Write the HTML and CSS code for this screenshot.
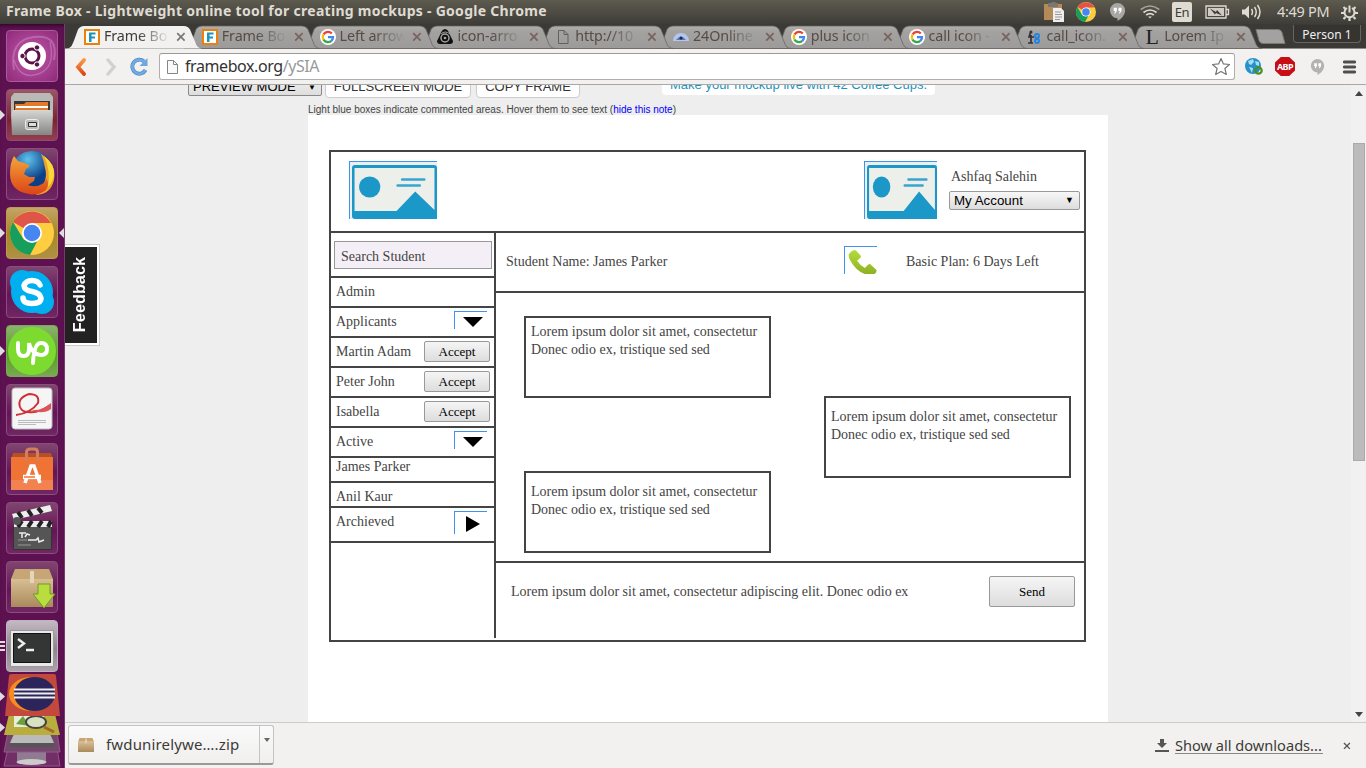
FILE: index.html
```html
<!DOCTYPE html>
<html lang="en">
<head>
<meta charset="utf-8">
<title>Frame Box - Lightweight online tool for creating mockups</title>
<link rel="stylesheet" href="styles.css">
</head>
<body>
<svg class="defs" width="0" height="0">
  <defs>
    <linearGradient id="tabg" x2="0" y2="1"><stop stop-color="#b0afac"/><stop offset=".25" stop-color="#a3a2a0"/><stop offset="1" stop-color="#9c9b99"/></linearGradient>
    <linearGradient id="orange" x2="0" y2="1"><stop stop-color="#f79a4a"/><stop offset="1" stop-color="#dd4814"/></linearGradient>
    <linearGradient id="metal" x2="0" y2="1"><stop stop-color="#d6d6d4"/><stop offset="1" stop-color="#858583"/></linearGradient>
    <linearGradient id="box" x2="0" y2="1"><stop stop-color="#d8be94"/><stop offset="1" stop-color="#a98a5c"/></linearGradient>
    <linearGradient id="green" x2="0" y2="1"><stop stop-color="#b5dc3c"/><stop offset="1" stop-color="#8cb021"/></linearGradient>
    <linearGradient id="fox" x2="0" y2="1"><stop stop-color="#f4a53a"/><stop offset="1" stop-color="#db4317"/></linearGradient>
    <radialGradient id="globe" cx=".4" cy=".2"><stop stop-color="#5fc3ee"/><stop offset="1" stop-color="#0b3f86"/></radialGradient>
    <symbol id="tab" viewBox="0 0 137 24"><path d="M0 24C5 24 6 21 8 16L12 5Q14 1.500 18 1.500H118Q122 1.500 124 5L129 17Q131 24 136 24Z"/></symbol>
    <symbol id="google" viewBox="0 0 16 16"><circle cx="8" cy="8" r="8" fill="#fff"/><g fill="none" stroke-width="2.300"><path d="M11.800 4.500A5.200 5.200 0 0 0 3.500 5.500" stroke="#ea4335"/><path d="M3.500 5.500A5.200 5.200 0 0 0 3.500 10.700" stroke="#fbbc05"/><path d="M3.500 10.600A5.200 5.200 0 0 0 11.300 11.800" stroke="#34a853"/><path d="M11.300 11.800A5 5 0 0 0 13 8.200H8" stroke="#4285f4"/></g></symbol>
    <symbol id="framebox" viewBox="0 0 16 16"><path fill="#fff" stroke="#e8820c" stroke-width="2" d="M1 1h14v14H1z"/><path d="M5 3.500h6.500v2H7.500v2h3.500v2H7.500V13H5z" fill="#1d93bd"/></symbol>
    <symbol id="chrome" viewBox="0 0 44 44"><circle cx="22" cy="22" r="22" fill="#ffcd40"/><path d="M22 22 3 11A22 22 0 0 1 41 12H22z" fill="#df5648"/><path d="M3 11 14 29 30 25 20 44A22 22 0 0 1 3 11z" fill="#179e5d"/><circle cx="22" cy="22" r="10" fill="#fff"/><circle cx="22" cy="22" r="8.300" fill="#4786f0"/></symbol>
    <symbol id="hangouts" viewBox="0 0 18 21"><path d="M9 1a8 8 0 0 1 8 8c0 5-4 9-8 11v-3a8 8 0 0 1 0-16z"/><path fill="#fff" d="M5 6h3.300v3.500L6.500 12H5.500l1-2.500H5zM10 6h3.300v3.500L11.500 12h-1l1-2.500H10z"/></symbol>
    <symbol id="close" viewBox="0 0 10 10"><path d="M1.200 1.200l7.400 7.400M8.600 1.200l-7.400 7.400" fill="none" stroke-width="1.700"/></symbol>
    <symbol id="photo" viewBox="0 0 84 54" preserveAspectRatio="none"><path fill="#1b98c7" d="M3 0h78q3 0 3 3v51H3q-3 0-3-3V3q0-3 3-3z"/><path fill="#edefeb" d="M2.500 3h79V45L62.500 26.500 44 46H2.500z"/><circle cx="17.500" cy="22" r="10.500" fill="#1b98c7"/><path d="M49.500 14.500h22M45 20.500h22" stroke="#38a5ce" stroke-width="2.400" stroke-linecap="round"/></symbol>
    <symbol id="parcel" viewBox="0 0 42 38"><path fill="#c7a675" d="M4 0h34l4 10H0z"/><path fill="url(#box)" d="M0 10h42v28H0z"/><path fill="#e5d5b8" d="M19 2h4v12h-4z"/></symbol>
  </defs>
</svg>
<div class="desktop">
  <header class="panel">
    <div class="panel-title">Frame Box - Lightweight online tool for creating mockups - Google Chrome</div>
    <div class="tray">
      <svg width="20" height="20" viewBox="0 0 20 20"><path fill="#b48a58" d="M0 2h18v16H0z"/><path fill="#777" d="M4 1h3l1-1h3l1 1h2v4H4z"/><path fill="#eee" d="M9 6h8l3 3v11H9z"/><path stroke="#999" d="M11 10h6M11 12.500h7M11 15h7M11 17.500h5"/></svg>
      <svg class="t-chrome" width="20" height="20"><use href="#chrome"/></svg>
      <svg class="t-hang" width="17" height="20"><use href="#hangouts" fill="#a8a7a4"/></svg>
      <svg class="t-wifi" width="20" height="14" viewBox="0 0 20 14" fill="none" stroke="#dfdbd2" stroke-width="1.700"><path d="M.8 4.500q9.200-7 18.400 0" opacity=".6"/><path d="M3.500 7.500q6.500-5 13 0M6.200 10q3.800-2.800 7.600 0"/><path d="M8.200 11.500h3.600L10 13.500z" fill="#dfdbd2" stroke="none"/></svg>
      <span class="lang">En</span>
      <svg class="t-bat" width="25" height="14" viewBox="0 0 25 14"><path fill="none" stroke="#dfdbd2" stroke-width="1.300" d="M1 1h20v12H1zM21.500 4.500h2v5h-2"/><path fill="#cfcbc3" d="M3 3h16v8H3z"/><path fill="#3c3b37" d="M5 3.500l6 3.500 1-2 5 5.500-6-2.500-1 1.500z"/></svg>
      <svg class="t-vol" width="21" height="16" viewBox="0 0 21 16"><path fill="#dfdbd2" d="M1 5.500h3l4-4v13l-4-4H1z"/><path fill="none" stroke="#dfdbd2" stroke-width="1.500" d="M10.500 5q2 3 0 6M13.500 3q3.500 5 0 10M16.500 1q5 7 0 14"/></svg>
      <span class="clock">4:49 PM</span>
      <svg class="t-gear" width="17" height="17" viewBox="0 0 17 17" fill="none" stroke="#dfdbd2"><path stroke-width="2" d="M11 4A5 5 0 1 1 6 4M8.500 1.500v7"/><path stroke-width="2.200" d="M0 9h3M14 9h3M8.500 14v3M2.500 3l2 2M14.500 3l-2 2M2.500 15l2-2M14.500 15l-2-2"/></svg>
    </div>
  </header>
  <div class="workspace">
    <nav class="launcher">
      <div class="tile dash"><svg width="52" height="52" viewBox="0 0 52 52"><path d="M8 40Q3 10 28 7T48 30" fill="none" stroke="#d18cc3" stroke-width="2" opacity=".5"/><path d="M44 12Q50 38 32 44T8 30" fill="none" stroke="#d18cc3" stroke-width="1.500" opacity=".5"/><circle cx="26" cy="26" r="14" fill="#fff"/><circle cx="26" cy="26" r="7" fill="none" stroke="#5a1249" stroke-width="3"/><g fill="#5a1249" stroke="#fff"><circle cx="16.500" cy="26" r="2.700"/><circle cx="31" cy="17.500" r="2.700"/><circle cx="31" cy="34.500" r="2.700"/></g></svg></div>
      <div class="tile files run"><svg width="52" height="52" viewBox="0 0 52 52"><path fill="#b9b9b7" d="M5 8l3-4h36l3 4v16H5z"/><path fill="#373735" d="M8 12h36v12H8z"/><path fill="#e4782b" d="M9 15h9l2-2h22v9H9z"/><path fill="#fff" d="M10 17h32v2H10z"/><path fill="url(#metal)" d="M7 21h38l2 4-1 21H6L5 25z"/><rect x="19.500" y="30.500" width="13" height="10" rx="2" fill="#bbb" stroke="#eee"/><path fill="#ddd" stroke="#333" d="M22.500 33.500h8v4h-8z"/></svg></div>
      <div class="tile"><svg width="52" height="52" viewBox="0 0 52 52"><circle cx="26" cy="24" r="21" fill="url(#globe)"/><path fill="#f0a02c" d="M35 6q16 10 13 26-3 14-18 15 13-14 9-27-1-7-4-14z"/><path fill="#f7d83b" d="M38 8q11 8 10 19-1 7-6 12 3-17-4-31z"/><path fill="url(#fox)" d="M8 8l4 5 9 3 3 2-4 3-2 5 5 3 6 0-1 4-6 4q8 3 14-1 3-1 4-6 4 5 0 12-8 6-17 4Q4 43 4 26 4 14 8 8z"/></svg></div>
      <div class="tile gold run focus"><svg width="44" height="44"><use href="#chrome"/></svg></div>
      <div class="tile"><svg width="52" height="52" viewBox="0 0 52 52"><g fill="#00aff0"><circle cx="26" cy="26" r="21"/><circle cx="16" cy="16" r="12"/><circle cx="36" cy="36" r="12"/></g><path d="M34 19Q32 14.500 26 14.500t-8 5q0 4.500 8 6t9 6.500q0 5.500-9 5.500T17 32" fill="none" stroke="#fff" stroke-width="5.500" stroke-linecap="round"/></svg></div>
      <div class="tile lime run"><svg width="52" height="52" viewBox="0 0 52 52"><circle cx="26" cy="26" r="24" fill="#7ddb2f"/><path d="M12 18v6q0 7 5.500 7t5.500-7v-6q1 6 7 11M27 38q1-20 8-20 6 0 6 6 0 6-6 6-3 0-6-2" fill="none" stroke="#fff" stroke-width="4" stroke-linecap="round"/></svg></div>
      <div class="tile"><svg width="52" height="52" viewBox="0 0 52 52"><rect x="6" y="4" width="40" height="41" rx="3" fill="#f5f5f5" stroke="#bbb"/><path d="M10 31q15-2 22-12 2-9-9-9-12 4-9 13 2 5 8 5 10 2 22-7" fill="none" stroke="#cf3036" stroke-width="2"/><path fill="#dc555a" d="M25 26q12 1 20-7v6q-8 6-20 1z"/><path stroke="#bbb" d="M12 36.500h28M12 38.500h28M12 40.500h18"/></svg></div>
      <div class="tile"><svg width="52" height="52" viewBox="0 0 52 52"><path fill="#b74f27" d="M7 10h38l2 6H5z"/><path fill="#ee7334" d="M5 14h42v33H5z"/><path fill="#f28350" d="M5 37h42v10H5z"/><path d="M20.500 18V9q0-3 4-3h4q3 0 3 3v9" fill="none" stroke="#d47f5c" stroke-width="3"/><path d="M19 40l6-17h3l6 17" fill="none" stroke="#fff" stroke-width="3.500"/><path d="M17 34h18" stroke="#fff" stroke-width="4.500"/><path d="M18 34h11" stroke="#ee7334" stroke-width="1.500"/></svg></div>
      <div class="tile"><svg width="52" height="52" viewBox="0 0 52 52"><path fill="#555" stroke="#333" d="M7.500 24.500h38v23h-38z"/><path fill="#eee" d="M6 12L44 3l2 6L8 18zM8 19h38v6H8z"/><path stroke="#222" stroke-width="4" d="M12 10l4 6M22 8l4 6M32 6l4 5M16 19l-4 6M26 19l-4 6M36 19l-4 6M45 19l-3 6"/><circle cx="11" cy="19" r="4" fill="#555"/><path stroke="#eee" fill="none" stroke-width="1.500" d="M13 31h7M16 31v5M19 35l2-3 3 1M22 38h8l2-2 1 4 5-2"/><path stroke="#999" d="M12 38h9M12 43h13"/></svg></div>
      <div class="tile"><svg width="52" height="52" viewBox="0 0 52 52"><use href="#parcel" x="5" y="8" width="42" height="38"/><path d="M32 23h12v10h5L38 47 27 33h5z" fill="#b9dc3e" stroke="#739b22"/></svg></div>
      <div class="tile silver run multi"><svg width="52" height="52" viewBox="0 0 52 52"><path fill="#e9e9e9" stroke="#999" d="M4.500 10.500h43v36h-43z"/><path fill="#343535" stroke="#111" d="M7.500 13.500h37v29h-37z"/><path d="M12 19l6 4.500-6 4.500M20 30h8" fill="none" stroke="#eee" stroke-width="2.400"/></svg></div>
      <svg class="stack" width="65" height="96" viewBox="0 0 65 96">
        <path fill="#722e67" stroke="#925a88" d="M8 76h49l3 18H4z"/><path fill="#917a92" d="M17 73h29v16H17z"/><ellipse cx="31.500" cy="90" rx="15" ry="3" fill="#ccc"/>
        <path fill="#75476d" stroke="#8d5d84" d="M8 60h49l3 20H4z"/><path fill="#bbb" d="M14 62h36l4 9H10z"/><path fill="#555" d="M10 71h44v4H10z"/>
        <path fill="#b8ad3d" d="M9 42h46l5 21H4z"/><path fill="#e8edda" d="M14 42h30v13H14z"/><path fill="#6ba03c" d="M16 52l7-8 7 10z"/><ellipse cx="36" cy="50" rx="10" ry="6" fill="#d8e2c1" stroke="#444" stroke-width="2"/><path stroke="#9f692e" stroke-width="3" d="M44 55l10 5"/>
        <path fill="#c3493c" d="M12 2h42q2 0 2 2l4 40H5L9 4q0-2 3-2z"/><ellipse cx="31" cy="22" rx="22" ry="17" fill="#f78b1f"/><ellipse cx="34.500" cy="22" rx="20.500" ry="17" fill="#2c255c"/><path stroke="#eee" stroke-width="2" d="M14 17.500h41M14 21.500h41M14 25.500h41"/>
        <path fill="#ddd" d="M0 20l5 4.500-5 4.500zM0 51l5 4.500-5 4.500z"/>
      </svg>
    </nav>
    <main class="browser">
      <div class="tabs">
        <div class="tab active"><svg class="shape" width="137" height="24"><use href="#tab"/></svg><svg class="fav"><use href="#framebox"/></svg><span>Frame Bo</span><svg class="x"><use href="#close"/></svg></div>
        <div class="tab"><svg class="shape" width="137" height="24"><use href="#tab"/></svg><svg class="fav"><use href="#framebox"/></svg><span>Frame Bo</span><svg class="x"><use href="#close"/></svg></div>
        <div class="tab"><svg class="shape" width="137" height="24"><use href="#tab"/></svg><svg class="fav"><use href="#google"/></svg><span>Left arrow</span><svg class="x"><use href="#close"/></svg></div>
        <div class="tab"><svg class="shape" width="137" height="24"><use href="#tab"/></svg><svg class="fav" viewBox="0 0 16 16"><path d="M8 0q3 0 5 6l3 6q0 3-3 3H3q-3 0-3-3l3-6Q5 0 8 0z"/><circle cx="8" cy="9" r="4" fill="none" stroke="#a3a2a0" stroke-width="1.500"/><path d="M4 5q4-4 9 0" stroke="#a3a2a0" fill="none"/><circle cx="8" cy="9" r="1.300" fill="#a3a2a0"/></svg><span>icon-arro</span><svg class="x"><use href="#close"/></svg></div>
        <div class="tab"><svg class="shape" width="137" height="24"><use href="#tab"/></svg><svg class="fav" viewBox="0 0 16 16"><path d="M3.500 1.500H9l4 4v9H3.500zM9 1.500v4h4" fill="none" stroke="#626160"/></svg><span>http://10</span><svg class="x"><use href="#close"/></svg></div>
        <div class="tab"><svg class="shape" width="137" height="24"><use href="#tab"/></svg><svg class="fav" viewBox="0 0 16 16"><path d="M0 12Q1 4 8 4t8 8z" fill="#b5c6ed"/><path d="M3 11Q8 4 13 11z" fill="#5876b8"/><circle cx="8" cy="9" r="1.500" fill="#172a60"/></svg><span>24Online</span><svg class="x"><use href="#close"/></svg></div>
        <div class="tab"><svg class="shape" width="137" height="24"><use href="#tab"/></svg><svg class="fav"><use href="#google"/></svg><span>plus icon</span><svg class="x"><use href="#close"/></svg></div>
        <div class="tab"><svg class="shape" width="137" height="24"><use href="#tab"/></svg><svg class="fav"><use href="#google"/></svg><span>call icon -</span><svg class="x"><use href="#close"/></svg></div>
        <div class="tab"><svg class="shape" width="137" height="24"><use href="#tab"/></svg><svg class="fav" viewBox="0 0 16 16"><path d="M5 2l-2 6h5M5 6v8M2 14h5" fill="none" stroke="#333" stroke-width="1.700"/><circle cx="5" cy="3" r="1.500" fill="#333"/><circle cx="11" cy="7" r="2" fill="none" stroke="#2383e2" stroke-width="2"/><circle cx="11" cy="12" r="2" fill="none" stroke="#2383e2" stroke-width="2"/></svg><span>call_icon.</span><svg class="x"><use href="#close"/></svg></div>
        <div class="tab"><svg class="shape" width="137" height="24"><use href="#tab"/></svg><i class="fav letter">L</i><span>Lorem Ip</span><svg class="x"><use href="#close"/></svg></div>
        <svg class="newtab" width="31" height="15" viewBox="0 0 31 15"><path d="M1 .5h22q3 0 4 3l3 11H8q-3 0-4-3z" fill="#a3a2a0" stroke="#777672"/></svg>
        <div class="person">Person 1</div>
      </div>
      <div class="toolbar">
        <svg class="back" width="11" height="18" viewBox="0 0 11 18"><path d="M9 2L3 9l6 7" fill="none" stroke="url(#orange)" stroke-width="3.800" stroke-linecap="round"/></svg>
        <svg class="fwd" width="11" height="18" viewBox="0 0 11 18"><path d="M2 2l6 7-6 7" fill="none" stroke="#d3d1ce" stroke-width="3.400" stroke-linecap="round"/></svg>
        <svg class="reload" width="19" height="19" viewBox="0 0 19 19"><path d="M14 4.500A7 7 0 1 0 15.500 13" fill="none" stroke="#4b8acb" stroke-width="3.800"/><path d="M14 4.500A7 7 0 1 0 15.500 13" fill="none" stroke="#75abe0" stroke-width="2.400"/><path d="M17.500 1v8h-8z" fill="#6fa6dc"/></svg>
        <div class="omnibox">
          <svg width="14" height="16" viewBox="0 0 14 16"><path d="M1.500 1.500h6l4 4v9h-10zM7.500 1.500v4h4" fill="#fafafa" stroke="#858585"/></svg>
          <span class="url">framebox.org<em>/ySIA</em></span>
          <svg class="star" width="20" height="19" viewBox="0 0 20 19"><path d="M10 1.500l2.400 5.400 6.100.6-4.600 4 1.400 6L10 14.400l-5.300 3.100 1.400-6-4.600-4 6.100-.6z" fill="#fff" stroke="#777" stroke-width="1.200" stroke-linejoin="round"/></svg>
        </div>
        <svg class="ext1" width="18" height="17" viewBox="0 0 18 17"><circle cx="8" cy="8" r="8" fill="#2491c9"/><path fill="#a7dcf1" d="M3 3l5-2 1 3-3 3-2-1zM10 3l4 1v4l-3-1zM4 9l4 1-1 5z"/><circle cx="13.500" cy="12.500" r="3.200" fill="none" stroke="#4d8e1f" stroke-width="2.200"/></svg>
        <div class="abp">ABP</div>
        <svg class="ext3" width="15" height="18" viewBox="0 0 18 21"><use href="#hangouts" fill="#b3b2b0"/></svg>
        <svg class="menu" width="13" height="14" viewBox="0 0 13 14"><path d="M1.200 2h10.600M1.200 7h10.600M1.200 12h10.600" stroke="#4e4e4e" stroke-width="2.800" stroke-linecap="round"/></svg>
      </div>
      <div class="viewport">
        <div class="page">
          <div class="fb-bar">
            <div class="fb-select"><span>PREVIEW MODE</span><b>▼</b></div>
            <div class="fb-btn full">FULLSCREEN MODE</div>
            <div class="fb-btn copy">COPY FRAME</div>
            <div class="fb-promo">Make your mockup live with 42 Coffee Cups.</div>
          </div>
          <p class="note">Light blue boxes indicate commented areas. Hover them to see text (<a>hide this note</a>)</p>
          <div class="canvas">
            <section class="mock">
              <div class="m-head">
                <div class="pic"><svg width="85" height="54" viewBox="0 0 84 54" preserveAspectRatio="none"><use href="#photo" width="84" height="54"/></svg></div>
                <div class="pic small"><svg width="70" height="54" viewBox="0 0 84 54" preserveAspectRatio="none"><use href="#photo" width="84" height="54"/></svg></div>
                <div class="account"><span>Ashfaq Salehin</span><div class="select"><span>My Account</span><b>▼</b></div></div>
              </div>
              <div class="m-body">
                <aside class="side">
                  <div class="row search"><div class="field">Search Student</div></div>
                  <div class="row">Admin</div>
                  <div class="row">Applicants<div class="arrow"><svg width="20" height="10"><path d="M0 0h20L10 10z"/></svg></div></div>
                  <div class="row">Martin Adam<div class="btn">Accept</div></div>
                  <div class="row">Peter John<div class="btn">Accept</div></div>
                  <div class="row">Isabella<div class="btn">Accept</div></div>
                  <div class="row">Active<div class="arrow"><svg width="20" height="10"><path d="M0 0h20L10 10z"/></svg></div></div>
                  <div class="row james">James Parker</div>
                  <div class="row anil">Anil Kaur</div>
                  <div class="row arch">Archieved<div class="arrow right"><svg width="14" height="16"><path d="M0 0v16L14 8z"/></svg></div></div>
                </aside>
                <div class="chat">
                  <div class="c-head"><span class="student">Student Name: James Parker</span>
                    <div class="phone"><svg width="29" height="25" viewBox="0 0 29 25"><path fill="url(#green)" d="M1 4Q3 1 6 0l2 .5 5 5.500q0 2-4 4.500 3 5 8 7.500 3-4 5-4l6.500 6q.5 2-2 4l-2 1h-4Q9 23 2 10 0 6 1 4z"/></svg></div>
                    <span class="plan">Basic Plan: 6 Days Left</span></div>
                  <div class="messages">
                    <div class="msg first">Lorem ipsum dolor sit amet, consectetur<br>Donec odio ex, tristique sed sed</div>
                    <div class="msg mine">Lorem ipsum dolor sit amet, consectetur<br>Donec odio ex, tristique sed sed</div>
                    <div class="msg third">Lorem ipsum dolor sit amet, consectetur<br>Donec odio ex, tristique sed sed</div>
                  </div>
                  <div class="compose"><span>Lorem ipsum dolor sit amet, consectetur adipiscing elit. Donec odio ex</span><div class="btn send">Send</div></div>
                </div>
              </div>
            </section>
          </div>
          <div class="feedback"><span>Feedback</span></div>
        </div>
        <div class="scroll"><svg width="8" height="5"><path d="M0 5l4-5 4 5z"/></svg><div class="thumb"></div><svg class="down" width="8" height="5"><path d="M0 0h8L4 5z"/></svg></div>
      </div>
      <footer class="downloads">
        <div class="item"><svg width="16" height="14" viewBox="0 0 42 38" preserveAspectRatio="none"><use href="#parcel" width="42" height="38"/></svg><span>fwdunirelywe….zip</span><div class="drop"><svg width="6" height="4"><path d="M0 0h6L3 4z" fill="#666"/></svg></div></div>
        <svg class="dl" width="14" height="13" viewBox="0 0 14 13"><path d="M5 0h4v4h3L7 9 2 4h3zM0 11h14v2H0z" fill="#555"/></svg>
        <span class="all">Show all downloads...</span>
        <svg class="dx" width="8" height="8"><use href="#close" stroke="#555"/></svg>
      </footer>
    </main>
  </div>
</div>
</body>
</html>
```
FILE: styles.css
```css
* { box-sizing: border-box; }
body { margin: 0; overflow: hidden; font-family: "Noto Sans", sans-serif; }
svg { display: block; flex: none; }
.defs { position: absolute; }
.desktop { width: 1366px; height: 768px; display: flex; flex-direction: column; }
.panel { height: 24px; background: linear-gradient(#5d5a4e, #3e3d38); display: flex; align-items: center; justify-content: space-between; padding: 0 8px 0 6px; color: #dfdbd2; }
.panel-title { font-weight: 700; font-size: 14px; line-height: 22px; height: 24px; letter-spacing: .28px; white-space: nowrap; }
.tray { display: flex; align-items: center; }
.t-chrome { margin-left: 12px; }
.t-hang { margin-left: 13px; }
.t-wifi { margin-left: 14px; }
.lang { margin-left: 12px; width: 20px; height: 20px; border-radius: 2px; background: #dfdbd2; color: #3c3b37; font-size: 13px; line-height: 20px; text-align: center; letter-spacing: -.5px; }
.t-bat { margin-left: 13px; }
.t-vol { margin-left: 11px; }
.clock { margin-left: 15px; width: 52px; font-size: 14.500px; line-height: 22px; height: 24px; letter-spacing: -.3px; white-space: nowrap; }
.t-gear { margin-left: 12px; }
.workspace { height: 744px; display: flex; }
.launcher { width: 65px; background: #5e1150; border-right: 1px solid #7a3a6c; display: flex; flex-direction: column; gap: 7px; padding: 6px 0 0 6px; box-shadow: inset 0 4px 4px -3px #22051d; }
.tile { position: relative; flex: none; width: 52px; height: 52px; border-radius: 4px; border: 1px solid #8a4d7d; background: linear-gradient(#80466f, #651557 55%, #702763); display: flex; align-items: center; justify-content: center; }
.dash { background: radial-gradient(circle, #c15baa, #8f2a7b); border-color: #a95a98; }
.files { background: linear-gradient(#9c5664, #7a2433 60%, #944050); }
.gold { background: linear-gradient(#c3a566, #a98625 50%, #ae9144); border-color: #b99c52; }
.lime { background: linear-gradient(#8ab46d, #5c9a28 55%, #79a952); border-color: #79a952; }
.silver { background: linear-gradient(#c4b9c3, #8f8390 55%, #ada1ac); border-color: #bfb4be; }
.run::before { content: ""; position: absolute; left: -7px; top: 20px; border: 5px solid transparent; border-left-color: #ddd; border-right: 0; }
.focus::after { content: ""; position: absolute; right: -7px; top: 20px; border: 5px solid transparent; border-right-color: #ddd; border-left: 0; }
.multi::before { border: 0; width: 5px; height: 10px; background: linear-gradient(#ddd 2px, transparent 2px 4px, #ddd 4px 6px, transparent 6px 8px, #ddd 8px); }
.stack { margin: -7px 0 0 -6px; }
.browser { width: 1301px; display: flex; flex-direction: column; }
.tabs { height: 25px; background: #3b3a36; display: flex; padding-left: 1px; border-bottom: 1px solid #8d8c89; isolation: isolate; }
.tab { position: relative; flex: none; width: 117.800px; height: 25px; display: flex; padding: 5px 0 0 18px; color: #564b45; fill: url(#tabg); stroke: #7a625e; }
.shape { position: absolute; left: 0; top: 0; z-index: -1; stroke: #666561; stroke-width: .8; height: 25px; }
.tab:first-child { z-index: 10; color: #3c3b37; stroke: #777; fill: #f2f1f0; }
.active .shape { stroke: none; }
.tab:nth-child(2) { z-index: 9; } .tab:nth-child(3) { z-index: 8; } .tab:nth-child(4) { z-index: 7; } .tab:nth-child(5) { z-index: 6; } .tab:nth-child(6) { z-index: 5; } .tab:nth-child(7) { z-index: 4; } .tab:nth-child(8) { z-index: 3; } .tab:nth-child(9) { z-index: 2; } .tab:nth-child(10) { z-index: 1; }
.fav { width: 16px; height: 16px; fill: #111; stroke: none; flex: none; }
.letter { font: 22px/16px "Liberation Serif", serif; color: #222; text-align: center; }
.tab span { flex: none; margin-left: 4px; width: 68px; height: 20px; margin-top: -3px; font-size: 14.300px; line-height: 20px; letter-spacing: -.1px; white-space: nowrap; -webkit-mask: linear-gradient(90deg, #000 50%, transparent 96%); mask: linear-gradient(90deg, #000 50%, transparent 96%); }
.x { width: 10px; height: 10px; margin: 3px 0 0 4px; }
.newtab { margin: 5px 0 0 11px; }
.person { margin: 1px 5px 0 auto; width: 68px; height: 18px; border: 1px solid #65645f; border-top: 0; border-radius: 0 0 4px 4px; background: #353430; color: #eee; font-size: 12px; line-height: 19px; text-align: center; letter-spacing: 0; }
.toolbar { height: 36px; background: #f2f1f0; border-bottom: 1px solid #a9a8a6; display: flex; align-items: center; padding: 0 10px; }
.fwd { margin-left: 20px; }
.reload { margin-left: 13px; }
.omnibox { margin-left: 10px; width: 1076px; height: 27px; background: #fff; border: 1px solid #b0afad; border-top-color: #999; border-radius: 3px; display: flex; align-items: center; padding: 0 3px 0 6px; }
.url { margin: -2px 0 0 5px; font-size: 16px; color: #333; white-space: nowrap; letter-spacing: -.42px; }
.url em { font-style: normal; color: #999; }
.star { margin-left: auto; }
.ext1 { margin-left: 10px; }
.abp { margin-left: 12px; width: 20px; height: 19px; background: #c70d15; clip-path: polygon(29% 0, 71% 0, 100% 29%, 100% 71%, 71% 100%, 29% 100%, 0 71%, 0 29%); color: #fff; font: bold 9px/19px "Noto Sans", sans-serif; letter-spacing: -.6px; text-align: center; }
.ext3 { margin-left: 15px; }
.menu { margin-left: auto; }
.viewport { height: 637px; display: flex; overflow: hidden; background: #eee; font-family: "Liberation Sans", Arial, sans-serif; }
.page { position: relative; width: 1286px; height: 637px; overflow: hidden; }
.fb-bar { height: 30px; margin-top: -13px; padding-left: 123px; display: flex; align-items: flex-start; font-size: 13px; line-height: 28px; color: #333; white-space: nowrap; }
.fb-select { width: 134px; height: 24px; border: 1px solid #888; border-radius: 2px; background: linear-gradient(#f8f8f8, #ddd); color: #000; padding: 0 5px 0 4px; display: flex; justify-content: space-between; }
.fb-select b { font-size: 8px; line-height: 29px; }
.fb-btn { margin-left: 3px; height: 26px; background: #fff; border: 1px solid #ccc; border-radius: 4px; text-align: center; }
.full { width: 146px; }
.copy { width: 104px; margin-left: 5px; }
.fb-promo { margin-left: 82px; width: 273px; height: 23px; line-height: 26px; background: #fff; border-radius: 4px; color: #1d93bd; text-align: center; }
.note { margin: 0 0 0 243px; height: 13px; font-size: 10px; line-height: 15px; color: #444; white-space: nowrap; }
.note a { color: #00f; }
.canvas { margin-left: 243px; width: 800px; height: 620px; background: #fff; padding: 35px 0 0 21px; }
.mock { width: 757px; height: 492px; border: 2px solid #444; font-family: "Liberation Serif", serif; font-size: 14px; line-height: 18px; color: #444; }
.m-head { height: 81px; border-bottom: 2px solid #444; display: flex; padding: 9px 4px 0 18px; }
.pic { width: 88px; height: 58px; border: 1px solid #3d94ef; border-right: 0; border-bottom: 0; background: #edefeb; padding: 3px 0 0 2px; }
.small { width: 73px; margin-left: 427px; }
.account { margin-left: 12px; padding-top: 7px; width: 131px; }
.account > span { margin-left: 2px; display: block; }
.select { margin-top: 5px; height: 19px; border: 1px solid #999; border-radius: 2px; background: linear-gradient(#f7f7f7, #ddd); color: #000; font: 13.330px/17px "Liberation Sans", sans-serif; display: flex; justify-content: space-between; padding: 0 5px 0 4px; }
.select b { font-size: 9px; }
.m-body { display: flex; }
.side { width: 165px; height: 405px; border-right: 2px solid #444; }
.row { height: 30px; border-bottom: 2px solid #444; padding: 5px 4px 0 5px; display: flex; justify-content: space-between; white-space: nowrap; }
.search { height: 45px; padding: 8px 2px 0 3px; }
.field { width: 158px; height: 28px; border: 1px solid #999; background: #f4eff6; padding: 6px 0 0 6px; }
.btn { height: 21px; margin-top: -2px; width: 66px; border: 1px solid #999; border-radius: 2px; background: linear-gradient(#f5f5f5, #ddd); color: #000; font-size: 13px; line-height: 19px; text-align: center; }
.arrow { width: 33px; height: 18px; margin: -2px 3px 0 0; border-left: 1px solid #3d94ef; border-top: 1px solid #3d94ef; padding: 5px 0 0 8px; }
.right { height: 23px; padding: 4px 0 0 11px; }
.james { height: 25px; padding-top: 0; }
.anil { height: 25px; }
.arch { height: 35px; }
.chat { width: 588px; }
.c-head { height: 60px; border-bottom: 2px solid #444; display: flex; padding: 13px 0 0 10px; }
.c-head span { padding-top: 7px; white-space: nowrap; }
.student { width: 338px; }
.phone { width: 33px; height: 28px; border-left: 1px solid #3d94ef; border-top: 1px solid #3d94ef; padding: 3px 0 0 3px; overflow: hidden; }
.plan { margin-left: 29px; }
.messages { height: 270px; border-bottom: 2px solid #444; padding: 23px 13px 0 28px; display: flex; flex-direction: column; align-items: flex-start; }
.msg { flex: none; width: 247px; height: 82px; border: 2px solid #444; padding: 10px 0 0 5px; white-space: nowrap; }
.first { padding-top: 5px; }
.mine { align-self: flex-end; margin-top: -2px; }
.third { margin-top: -7px; }
.compose { display: flex; justify-content: space-between; padding: 13px 9px 0 15px; }
.compose span { padding-top: 7px; }
.send { margin: 0; width: 86px; height: 31px; line-height: 29px; }
.feedback { position: absolute; left: 0; top: 160px; width: 34px; height: 100px; background: #222; border: 2px solid #fff; border-left: 0; outline: 1px solid #ccc; display: flex; align-items: center; justify-content: center; }
.feedback span { writing-mode: vertical-rl; transform: rotate(180deg); color: #fff; font-size: 16.300px; font-weight: 700; margin-right: 4px; }
.scroll { width: 15px; background: #f1f1f1; display: flex; flex-direction: column; align-items: center; padding-top: 6px; fill: #444; }
.thumb { margin: 47px 0 0 1px; width: 12px; height: 318px; background: #bbb; border: 1px solid #aaa; }
.down { margin-top: auto; margin-bottom: 5px; }
.downloads { height: 46px; background: #f2f1f0; border-top: 1px solid #ccc; display: flex; align-items: center; padding: 0 15px 0 3px; color: #3c3b37; }
.item { width: 206px; height: 40px; margin-top: -1px; border: 1px solid #c5c4c2; border-bottom: 2px solid #999; border-radius: 3px; background: linear-gradient(#fafafa, #f0efee); display: flex; align-items: center; padding-left: 9px; }
.item span { margin: -2px 0 0 12px; font-size: 15px; letter-spacing: .15px; white-space: nowrap; }
.drop { margin-left: auto; width: 14px; height: 37px; border-left: 1px solid #c5c4c2; padding: 12px 0 0 4px; }
.dl { margin-left: auto; }
.all { margin: -1px 0 0 6px; width: 148px; font-size: 14.600px; line-height: 16px; border-bottom: 1px solid #888; white-space: nowrap; }
.dx { margin-left: 20px; }
```
